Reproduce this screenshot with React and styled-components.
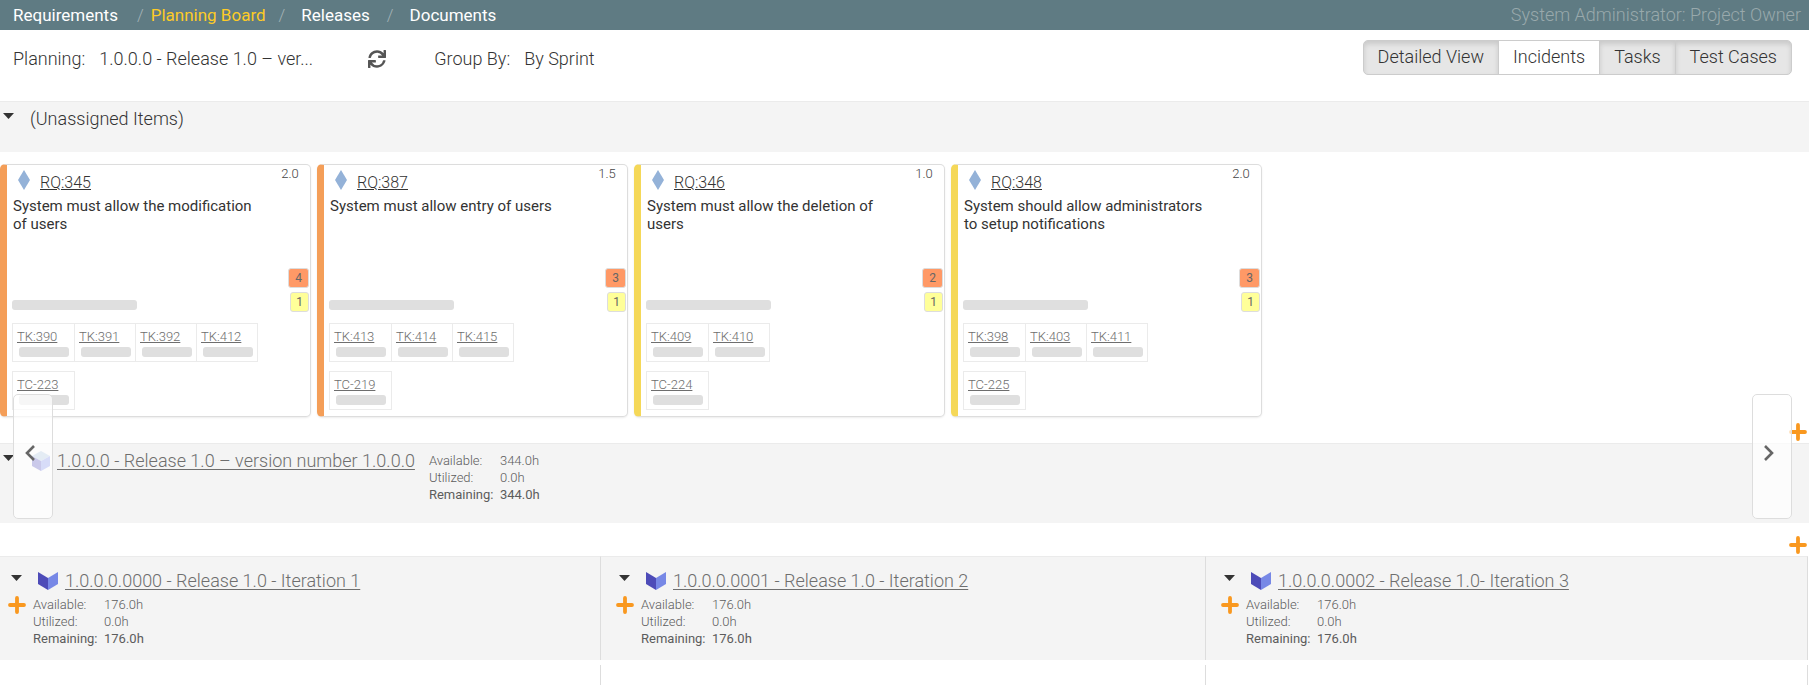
import React from "react";
import styled, { createGlobalStyle, css } from "styled-components";
import { FaSync } from "react-icons/fa";

const GlobalStyle = createGlobalStyle`
  *, *::before, *::after { box-sizing: border-box; }
  body {
    margin: 0;
    background: #fff;
    color: #333;
    font-family: Roboto, "Liberation Sans", sans-serif;
    font-size: 18px;
    font-weight: 300;
    line-height: 24px;
  }
  button, select { font: inherit; color: inherit; }
`;

const Page = styled.div`
  display: flex;
  flex-direction: column;
  min-height: 100vh;
  overflow-x: hidden;
`;

const TopBar = styled.header`
  display: flex;
  justify-content: space-between;
  align-items: center;
  height: 30px;
  padding: 0 8px 0 13px;
  background: #5f7b83;
  color: #fff;
`;

const Crumbs = styled.nav`
  display: flex;
  align-items: center;
  font-size: 17px;
  font-weight: 400;
`;

const Crumb = styled.a`
  color: ${(p) => (p.$current ? "#fdcb26" : "#fff")};
  text-decoration: none;
`;

const slashPadding = {
  before: "0 7px 0 19px",
  after: "0 16px 0 13px",
  plain: "0 16px 0 17px",
};

const Slash = styled.span`
  color: #a3b2b6;
  font-weight: 300;
  padding: ${(p) => slashPadding[p.$place]};
`;

const Role = styled.span`
  color: #99a9ac;
`;

const Toolbar = styled.div`
  display: flex;
  align-items: flex-start;
  height: 71px;
  padding: 10px 17px 0 13px;
`;

const Field = styled.div`
  display: flex;
  gap: 14px;
  align-items: center;
  height: 38px;
`;

const PlainSelect = styled.select`
  appearance: none;
  border: 0;
  padding: 0;
  background: transparent;
  width: ${(p) => p.$width}px;
`;

const IconButton = styled.button`
  display: flex;
  padding: 0;
  border: 0;
  background: transparent;
  line-height: 0;
  cursor: pointer;
`;

const RefreshButton = styled(IconButton)`
  color: #555;
  height: 38px;
  align-items: center;
  margin: 0 48px 0 56px;
`;

const ToggleGroup = styled.div`
  display: flex;
  margin-left: auto;
`;

const Toggle = styled.button`
  height: 35px;
  padding: 0 14px 2px;
  margin-left: -1px;
  border: 1px solid #ccc;
  background: #fff;
  ${(p) =>
    p.$on &&
    css`
      background: #e6e6e6;
      box-shadow: inset 0 3px 5px rgba(0, 0, 0, 0.125);
    `}
  &:first-child { border-radius: 5px 0 0 5px; }
  &:last-child { border-radius: 0 5px 5px 0; }
`;

const Band = styled.section`
  display: flex;
  align-items: flex-start;
  min-height: ${(p) => p.$height}px;
  padding: 5px 3px;
  border-top: 1px solid #ebebeb;
  background: #f4f4f4;
`;

const Collapse = styled(IconButton)`
  width: 11px;
  height: 12px;
  margin-top: 3px;
  align-items: center;
  justify-content: center;
`;

const BandTitle = styled.h2`
  margin: 0 0 0 16px;
  font-size: 18px;
  font-weight: 300;
`;

const ReleaseLink = styled.a`
  color: #6e6e6e;
  text-underline-offset: 2px;
`;

const ReleaseHead = styled.div`
  display: flex;
  align-items: center;
  gap: 7px;
  margin: 0 14px 0 18px;
`;

const Metrics = styled.dl`
  display: grid;
  grid-template-columns: 71px auto;
  margin: 0;
  padding-top: 3px;
  color: #5c5c5c;
  font-size: 13px;
  line-height: 17px;
`;

const MetricLabel = styled.dt`
  font-weight: ${(p) => (p.$strong ? 400 : 300)};
`;

const MetricValue = styled.dd`
  margin: 0;
  font-weight: ${(p) => (p.$strong ? 400 : 300)};
`;

const CardRow = styled.div`
  display: flex;
  gap: 6px;
  padding: 12px 0 8px;
`;

const Card = styled.article`
  position: relative;
  width: 311px;
  height: 253px;
  padding: 5px 46px 0 5px;
  border: 1px solid #ddd;
  border-left: 7px solid ${(p) => p.$accent};
  border-radius: 5px;
  box-shadow: 0 1px 2px rgba(0, 0, 0, 0.08);
  background: #fff;
`;

const CardHead = styled.div`
  display: flex;
  gap: 10px;
  align-items: flex-start;
  padding-left: 6px;
  height: 27px;
`;

const CardLink = styled.a`
  color: #333;
  font-size: 16px;
  line-height: 26px;
`;

const Estimate = styled.span`
  position: absolute;
  top: 0;
  right: 7px;
  width: 26px;
  text-align: center;
  font-size: 13px;
  line-height: 18px;
  color: #444;
`;

const Summary = styled.p`
  margin: 0 0 0 1px;
  height: 103px;
  font-size: 15px;
  font-weight: 400;
  line-height: 18px;
`;

const Badges = styled.div`
  position: absolute;
  top: 103px;
  right: 1px;
  display: flex;
  flex-direction: column;
  align-items: flex-end;
  gap: 4px;
`;

const Badge = styled.span`
  padding: 0 ${(p) => (p.$wide ? 6 : 5)}px;
  border: 1px solid #ddd;
  border-radius: 3px;
  background: ${(p) => p.$color};
  color: #666;
  font-size: 12px;
  font-weight: 400;
  line-height: 18px;
`;

const Meter = styled.div`
  width: ${(p) => p.$width}px;
  height: 10px;
  border-radius: 3px;
  background: #dfdfdf;
`;

const Chips = styled.ul`
  display: flex;
  width: max-content;
  margin: ${(p) => p.$gap}px 0 0;
  padding: 0;
  list-style: none;
  border: 1px solid #ebebeb;
`;

const Chip = styled.li`
  width: 61px;
  height: 37px;
  padding: 4px 0 0 4px;
  & + & { border-left: 1px solid #ebebeb; }
  a {
    display: block;
    color: #6e6e6e;
    font-size: 13px;
    line-height: 18px;
  }
  ${Meter} { margin: 1px 0 0 2px; }
`;

const AddLine = styled.div`
  display: flex;
  justify-content: flex-end;
  align-items: flex-end;
  height: ${(p) => p.$height}px;
  padding: 0 2px 2px 0;
`;

const Sprints = styled.div`
  display: grid;
  grid-template-columns: 601fr 605fr 602fr;
  grid-template-rows: auto 1fr;
  row-gap: 5px;
  flex: 1;
  padding-right: 1px;
`;

const Sprint = styled.section`
  display: grid;
  grid-template-columns: 25px auto;
  align-content: start;
  height: 104px;
  padding: 12px 0 0 8px;
  border-top: 1px solid #ebebeb;
  border-right: 1px solid #ddd;
  background: #f4f4f4;
  & + & { padding-left: 15px; }
  ${Collapse} { margin: 3px 0 0 3px; }
  ${ReleaseHead} { margin: 0 0 0 5px; }
  & > ${IconButton}:last-of-type { margin-top: 3px; }
`;

const Lane = styled.div`
  min-height: 20px;
  border-right: 1px solid #ddd;
`;

const Pager = styled.button`
  position: fixed;
  top: 394px;
  ${(p) => p.$side}: ${(p) => (p.$side === "left" ? 13 : 17)}px;
  display: flex;
  align-items: center;
  width: 40px;
  height: 125px;
  padding: 0 0 8px 11px;
  border: 1px solid #ddd;
  border-radius: 5px;
  background: rgba(255, 255, 255, 0.7);
`;

const Caret = () => (
  <svg width="11" height="6" viewBox="0 0 11 6" aria-hidden="true">
    <path d="M0 0H11L5.5 6Z" fill="#333" />
  </svg>
);

const Plus = () => (
  <svg width="18" height="18" viewBox="0 0 18 18" aria-hidden="true">
    <path d="M9 2V16M2 9H16" stroke="#f9981f" strokeWidth="3.8" strokeLinecap="round" />
  </svg>
);

const Diamond = () => (
  <svg width="12" height="20" viewBox="0 0 12 20" aria-hidden="true">
    <path d="M6 0L12 10L6 20L0 10Z" fill="#94b2d8" />
  </svg>
);

const Cube = () => (
  <svg width="18" height="20" viewBox="0 0 18 20" aria-hidden="true">
    <path d="M9 0L18 5L9 10L0 5Z" fill="#a5bfdb" />
    <path d="M0 5L9 10V20L0 15Z" fill="#4d4bb8" />
    <path d="M18 5L9 10V20L18 15Z" fill="#7b8ae6" />
  </svg>
);

const Book = () => (
  <svg width="20" height="18" viewBox="0 0 20 18" aria-hidden="true">
    <path d="M0 0L10 6V18L0 12Z" fill="#4d4bb8" />
    <path d="M20 0L10 6V18L20 12Z" fill="#7788e6" />
  </svg>
);

const Chevron = ({ d }) => (
  <svg width="10" height="16" viewBox="0 0 10 16" aria-hidden="true">
    <path d={d} fill="none" stroke="#666" strokeWidth="2.6" />
  </svg>
);

const cards = [
  { id: "RQ:345", accent: "#f49e58", points: "2.0", text: "System must allow the modification of users", high: 4, tasks: ["TK:390", "TK:391", "TK:392", "TK:412"], test: "TC-223" },
  { id: "RQ:387", accent: "#f49e58", points: "1.5", text: "System must allow entry of users", high: 3, tasks: ["TK:413", "TK:414", "TK:415"], test: "TC-219" },
  { id: "RQ:346", accent: "#f5d858", points: "1.0", text: "System must allow the deletion of users", high: 2, tasks: ["TK:409", "TK:410"], test: "TC-224" },
  { id: "RQ:348", accent: "#f5d858", points: "2.0", text: "System should allow administrators to setup notifications", high: 3, tasks: ["TK:398", "TK:403", "TK:411"], test: "TC-225" },
];

const sprints = [
  "1.0.0.0.0000 - Release 1.0 - Iteration 1",
  "1.0.0.0.0001 - Release 1.0 - Iteration 2",
  "1.0.0.0.0002 - Release 1.0- Iteration 3",
];

const views = [
  ["Detailed View", true],
  ["Incidents", false],
  ["Tasks", true],
  ["Test Cases", true],
];

const Effort = ({ hours }) => (
  <Metrics>
    <MetricLabel>Available:</MetricLabel>
    <MetricValue>{hours}</MetricValue>
    <MetricLabel>Utilized:</MetricLabel>
    <MetricValue>0.0h</MetricValue>
    <MetricLabel $strong>Remaining:</MetricLabel>
    <MetricValue $strong>{hours}</MetricValue>
  </Metrics>
);

const ChipList = ({ items, gap }) => (
  <Chips $gap={gap}>
    {items.map((item) => (
      <Chip key={item}>
        <a href="#item">{item}</a>
        <Meter $width={50} />
      </Chip>
    ))}
  </Chips>
);

const RequirementCard = ({ card }) => (
  <Card $accent={card.accent}>
    <CardHead>
      <Diamond />
      <CardLink href="#requirement">{card.id}</CardLink>
    </CardHead>
    <Estimate>{card.points}</Estimate>
    <Summary>{card.text}</Summary>
    <Badges>
      <Badge $wide $color="#ff9966">{card.high}</Badge>
      <Badge $color="#ffff99">1</Badge>
    </Badges>
    <Meter $width={125} />
    <ChipList items={card.tasks} gap={13} />
    <ChipList items={[card.test]} gap={9} />
  </Card>
);

export default function App() {
  return (
    <Page>
      <GlobalStyle />
      <TopBar>
        <Crumbs>
          <Crumb href="#requirements">Requirements</Crumb>
          <Slash $place="before">/</Slash>
          <Crumb href="#planning" $current>Planning Board</Crumb>
          <Slash $place="after">/</Slash>
          <Crumb href="#releases">Releases</Crumb>
          <Slash $place="plain">/</Slash>
          <Crumb href="#documents">Documents</Crumb>
        </Crumbs>
        <Role>System Administrator: Project Owner</Role>
      </TopBar>
      <Toolbar>
        <Field>
          <label htmlFor="release">Planning:</label>
          <PlainSelect id="release" $width={213}>
            <option>1.0.0.0 - Release 1.0 – ver...</option>
          </PlainSelect>
        </Field>
        <RefreshButton aria-label="Refresh">
          <FaSync size={18} />
        </RefreshButton>
        <Field>
          <label htmlFor="group">Group By:</label>
          <PlainSelect id="group" $width={120}>
            <option>By Sprint</option>
          </PlainSelect>
        </Field>
        <ToggleGroup>
          {views.map(([name, on]) => (
            <Toggle key={name} $on={on} aria-pressed={on}>{name}</Toggle>
          ))}
        </ToggleGroup>
      </Toolbar>
      <Band $height={51}>
        <Collapse aria-label="Collapse unassigned items"><Caret /></Collapse>
        <BandTitle>(Unassigned Items)</BandTitle>
      </Band>
      <CardRow>
        {cards.map((card) => <RequirementCard key={card.id} card={card} />)}
      </CardRow>
      <AddLine $height={18}>
        <IconButton aria-label="Add item"><Plus /></IconButton>
      </AddLine>
      <Band $height={80}>
        <Collapse aria-label="Collapse release"><Caret /></Collapse>
        <ReleaseHead>
          <Cube />
          <ReleaseLink href="#release">1.0.0.0 - Release 1.0 – version number 1.0.0.0</ReleaseLink>
        </ReleaseHead>
        <Effort hours="344.0h" />
      </Band>
      <AddLine $height={33}>
        <IconButton aria-label="Add item to release"><Plus /></IconButton>
      </AddLine>
      <Sprints>
        {sprints.map((name) => (
          <Sprint key={name}>
            <Collapse aria-label="Collapse sprint"><Caret /></Collapse>
            <ReleaseHead>
              <Book />
              <ReleaseLink href="#sprint">{name}</ReleaseLink>
            </ReleaseHead>
            <IconButton aria-label="Add item to sprint"><Plus /></IconButton>
            <Effort hours="176.0h" />
          </Sprint>
        ))}
        {sprints.map((name) => <Lane key={name} />)}
      </Sprints>
      <Pager $side="left" aria-label="Previous"><Chevron d="M9 1L2 8L9 15" /></Pager>
      <Pager $side="right" aria-label="Next"><Chevron d="M1 1L8 8L1 15" /></Pager>
    </Page>
  );
}
